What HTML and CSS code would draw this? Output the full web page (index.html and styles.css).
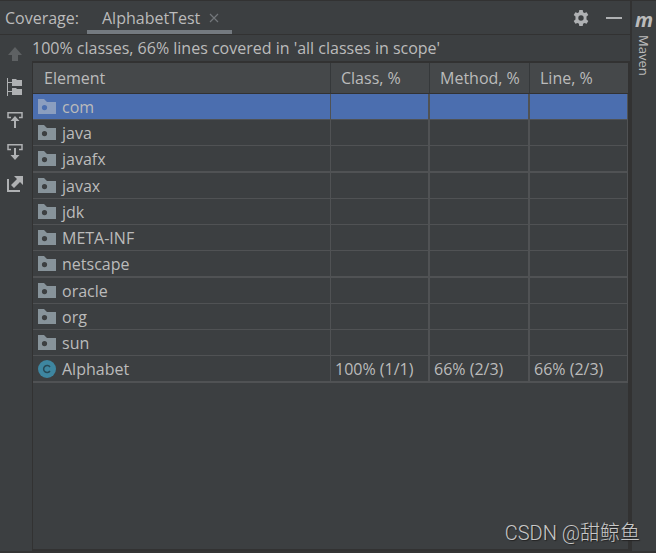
FILE: index.html
```html
<!doctype html>
<html lang="en">
  <head>
    <meta charset="UTF-8" />
    <meta name="viewport" content="width=device-width, initial-scale=1.0" />
    <title>Coverage: AlphabetTest</title>
    <link rel="stylesheet" href="styles.css">
  </head>
  <body>
    <!-- shared icons -->
    <svg class="sprite" aria-hidden="true">
      <symbol id="folder" viewBox="0 0 18 15">
        <path fill-rule="evenodd" d="M0 0h6l3 3h9v12H0zM6.500 6a2.600 2.600 0 1 0 0 5.200 2.600 2.600 0 0 0 0-5.200z" />
      </symbol>
    </svg>

    <div class="window">
      <main class="tool-window">
        <header class="tool-header">
          <h1 class="title">Coverage:</h1>
          <div class="tab">
            <span>AlphabetTest</span>
            <button class="icon-button tab-close" aria-label="Close tab">
              <svg width="10" height="10" viewBox="0 0 10 10"><path d="M1 1l8 8M9 1L1 9" fill="none" stroke="#72767a" stroke-width="1.200" /></svg>
            </button>
          </div>
          <div class="header-actions">
            <button class="icon-button" aria-label="Settings">
              <svg width="16" height="16" viewBox="0 0 16 16">
                <path fill="#afb1b3" fill-rule="evenodd" d="M6.300 0h3.400l.4 2.300 1.300.7 2.200-.8 1.700 2.900-1.800 1.500v2.800l1.800 1.500-1.700 2.900-2.200-.8-1.300.7-.4 2.300H6.300l-.4-2.300-1.300-.7-2.200.8-1.700-2.900 1.800-1.500V6.600L.7 5.100l1.700-2.900 2.200.8 1.300-.7zM8 5.300a2.700 2.700 0 1 0 0 5.400 2.700 2.700 0 0 0 0-5.400z" />
              </svg>
            </button>
            <button class="icon-button" aria-label="Hide">
              <svg width="16" height="16" viewBox="0 0 16 16"><path fill="#afb1b3" d="M0 7h16v2H0z" /></svg>
            </button>
          </div>
        </header>

        <div class="tool-body">
          <nav class="toolbar" aria-label="Coverage actions">
            <button class="icon-button" aria-label="Navigate up" disabled>
              <svg width="16" height="16" viewBox="0 0 16 16"><path fill="#5e6163" d="M8 1l7 8h-4v6H5V9H1z" /></svg>
            </button>
            <button class="icon-button" aria-label="Flatten packages">
              <svg width="16" height="18" viewBox="0 0 16 18">
                <path fill="#afb1b3" d="M0 0h1v18H0zM1 4h4v1H1zM1 13h4v1H1zM5 1h4l1 1h5v6H5zM5 10h4l1 1h5v6H5z" />
              </svg>
            </button>
            <button class="icon-button" aria-label="Always select opened element">
              <svg width="16" height="16" viewBox="0 0 16 16">
                <path fill="none" stroke="#afb1b3" stroke-width="1.500" d="M4 5.500H1V.8h14v4.700h-3" />
                <path fill="#afb1b3" d="M8 4l4.500 5H9v7H7V9H3.500z" />
              </svg>
            </button>
            <button class="icon-button" aria-label="Autoscroll to source">
              <svg width="16" height="16" viewBox="0 0 16 16">
                <path fill="none" stroke="#afb1b3" stroke-width="1.500" d="M4 5.500H1V.8h14v4.700h-3" />
                <path fill="#afb1b3" d="M7 4h2v7h3.500L8 16l-4.500-5H7z" />
              </svg>
            </button>
            <button class="icon-button" aria-label="Generate coverage report">
              <svg width="16" height="16" viewBox="0 0 16 16">
                <path fill="#afb1b3" d="M0 3h2v11h11v2H0zM7 0h9v9l-3-3-6 6-3-3 6-6z" />
              </svg>
            </button>
          </nav>

          <section class="content">
            <p class="summary">100% classes, 66% lines covered in 'all classes in scope'</p>
            <div class="table-area">
              <table class="coverage">
                <thead>
                  <tr>
                    <th scope="col">Element</th>
                    <th scope="col" class="col-class">Class, %</th>
                    <th scope="col" class="col-method">Method, %</th>
                    <th scope="col" class="col-line">Line, %</th>
                  </tr>
                </thead>
                <tbody>
                  <tr class="selected"><td><svg class="folder"><use href="#folder" /></svg>com</td><td></td><td></td><td></td></tr>
                  <tr><td><svg class="folder"><use href="#folder" /></svg>java</td><td></td><td></td><td></td></tr>
                  <tr class="thick"><td><svg class="folder"><use href="#folder" /></svg>javafx</td><td></td><td></td><td></td></tr>
                  <tr><td><svg class="folder"><use href="#folder" /></svg>javax</td><td></td><td></td><td></td></tr>
                  <tr><td><svg class="folder"><use href="#folder" /></svg>jdk</td><td></td><td></td><td></td></tr>
                  <tr><td><svg class="folder"><use href="#folder" /></svg>META-INF</td><td></td><td></td><td></td></tr>
                  <tr class="thick"><td><svg class="folder"><use href="#folder" /></svg>netscape</td><td></td><td></td><td></td></tr>
                  <tr><td><svg class="folder"><use href="#folder" /></svg>oracle</td><td></td><td></td><td></td></tr>
                  <tr><td><svg class="folder"><use href="#folder" /></svg>org</td><td></td><td></td><td></td></tr>
                  <tr><td><svg class="folder"><use href="#folder" /></svg>sun</td><td></td><td></td><td></td></tr>
                  <tr class="thick">
                    <td>
                      <svg class="class-icon" viewBox="0 0 18 18">
                        <circle cx="9" cy="9" r="9" fill="#3e86a0" />
                        <path d="M12 7a3.500 3.500 0 1 0 0 4" fill="none" stroke="#274956" stroke-width="1.500" />
                      </svg>Alphabet
                    </td>
                    <td>100% (1/1)</td>
                    <td>66% (2/3)</td>
                    <td>66% (2/3)</td>
                  </tr>
                </tbody>
              </table>
            </div>
          </section>
        </div>
      </main>

      <aside class="side-bar">
        <button class="side-tab">
          <span class="maven-logo" aria-hidden="true">m</span>
          <span class="side-label">Maven</span>
        </button>
      </aside>
    </div>

    <div class="watermark">CSDN @甜鲸鱼</div>
  </body>
</html>
```

FILE: styles.css
```css
* {
  box-sizing: border-box;
}
body {
  margin: 0;
  background-color: #3c3f41;
  color: #bbbbbb;
  font-family: "Open Sans", "Noto Sans", "Noto Sans CJK SC", sans-serif;
  font-size: 16px;
  line-height: 20px;
}
button {
  font: inherit;
  color: inherit;
}
.sprite {
  display: none;
}
.window {
  display: flex;
  min-height: 100vh;
  border-top: 1px solid #323232;
  border-bottom: 2px solid #353535;
}
.tool-window {
  flex: 1;
  display: flex;
  flex-direction: column;
  min-width: 0;
}

/* header */
.tool-header {
  display: flex;
  align-items: stretch;
  height: 34px;
  border-bottom: 1px solid #323232;
}
.title {
  margin: 0;
  padding: 7px 8px 0 5px;
  font-size: 16px;
  font-weight: normal;
}
.tab {
  display: flex;
  align-items: center;
  gap: 9px;
  padding: 4px 13px 0 15px;
  border-bottom: 4px solid #747a80;
}
.icon-button {
  display: flex;
  padding: 0;
  border: none;
  background: none;
  cursor: pointer;
}
.header-actions {
  display: flex;
  align-items: center;
  gap: 17px;
  margin-left: auto;
  padding-right: 8px;
}

/* body */
.tool-body {
  flex: 1;
  display: flex;
}
.toolbar {
  display: flex;
  flex-direction: column;
  align-items: center;
  gap: 16px;
  width: 32px;
  padding: 11px 2px 0 0;
}
.content {
  flex: 1;
  display: flex;
  flex-direction: column;
  min-width: 0;
}
.summary {
  margin: 0;
  padding: 3px 0;
}
.table-area {
  flex: 1;
  border: solid #323232;
  border-width: 2px 2px 2px 1px;
}
.coverage {
  width: 100%;
  table-layout: fixed;
  border-collapse: separate;
  border-spacing: 0;
}
.coverage th {
  height: 31px;
  padding: 0 0 0 10px;
  background-color: #45484a;
  border-right: 1px solid #35383a;
  border-bottom: 1px solid #323232;
  font-weight: normal;
  text-align: left;
}
.coverage th:first-child {
  padding-left: 11px;
}
.coverage th:last-child {
  border-right: none;
}
.col-class {
  width: 99px;
}
.col-method {
  width: 100px;
}
.col-line {
  width: 98px;
}
.coverage td {
  height: 26px;
  padding: 0 0 0 4px;
  border-right: 2px solid #505254;
  border-bottom: 1px solid #505254;
}
.coverage td:first-child {
  padding-left: 5px;
}
.coverage td:first-child,
.coverage td:last-child {
  border-right-width: 1px;
}
.coverage .thick td {
  height: 27px;
  border-bottom-width: 2px;
}
.coverage .selected td {
  background-color: #4b6eaf;
}
.folder,
.class-icon {
  width: 18px;
  height: 18px;
  margin-right: 6px;
  vertical-align: middle;
}
.folder {
  height: 15px;
  margin-top: -4px;
  fill: #87939a;
}
.class-icon {
  margin-top: -2px;
}
.selected .folder {
  fill: #8b9ebf;
}

/* right stripe */
.side-bar {
  width: 26px;
  border-left: 2px solid #323232;
}
.side-tab {
  display: flex;
  flex-direction: column;
  align-items: center;
  width: 100%;
  padding: 7px 0 0;
  border: none;
  background: none;
}
.maven-logo {
  font-family: "Open Sans", sans-serif;
  font-size: 20px;
  font-style: italic;
  font-weight: bold;
  line-height: 24px;
}
.side-label {
  margin-top: 3px;
  font-size: 13px;
  line-height: 22px;
  writing-mode: vertical-rl;
}

.watermark {
  position: absolute;
  right: 16px;
  bottom: 8px;
  color: #c8c8c8;
  font-family: Roboto, "Noto Sans CJK SC", sans-serif;
  font-size: 20px;
  font-weight: 300;
  line-height: 24px;
  text-shadow: 1px 1px 1px #222222;
}
```
